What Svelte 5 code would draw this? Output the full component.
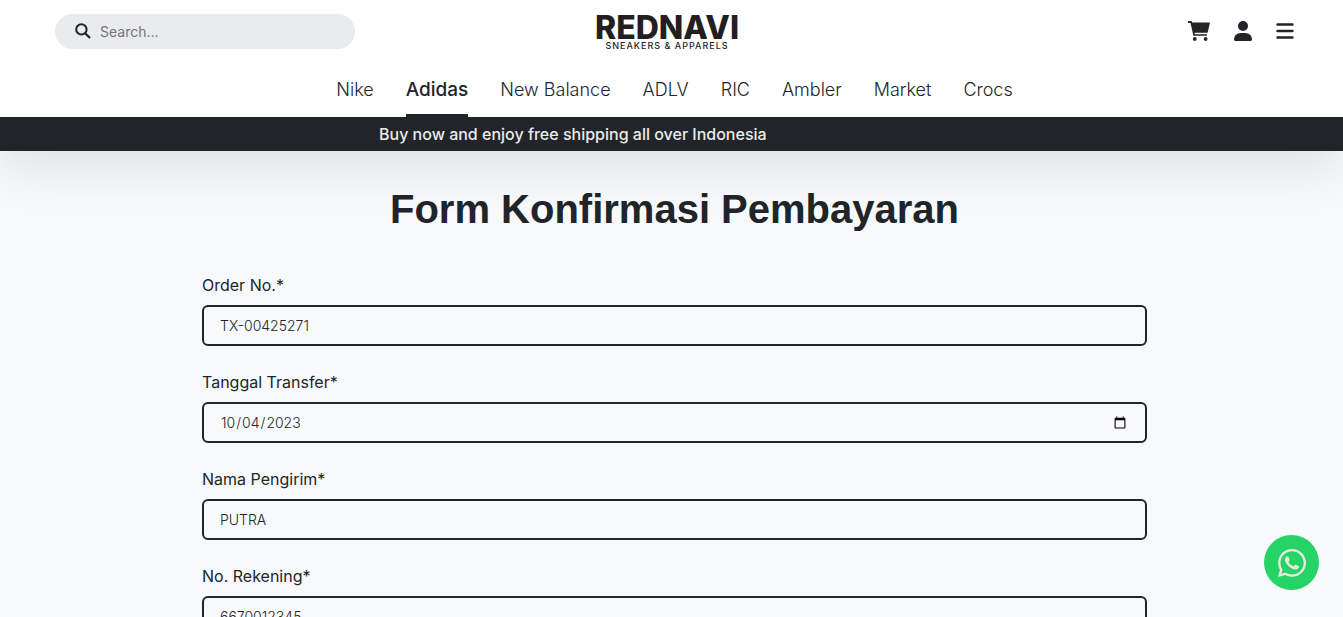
<script>
  const brands = ['Nike', 'Adidas', 'New Balance', 'ADLV', 'RIC', 'Ambler', 'Market', 'Crocs'];
  const active = 'Adidas';

  let fields = $state([
    { id: 'order', label: 'Order No.*', type: 'text', value: 'TX-00425271' },
    { id: 'date', label: 'Tanggal Transfer*', type: 'date', value: '2023-10-04' },
    { id: 'sender', label: 'Nama Pengirim*', type: 'text', value: 'PUTRA' },
    { id: 'account', label: 'No. Rekening*', type: 'text', value: '6670012345' }
  ]);
</script>

<header>
  <div class="top">
    <form class="search" role="search">
      <svg width="16" height="16" viewBox="0 0 16 16" fill="none" stroke="currentColor" stroke-width="2" aria-hidden="true">
        <circle cx="6.4" cy="6.4" r="5.2" />
        <path d="M10.2 10.2 15 15" stroke-width="2.3" />
      </svg>
      <input type="search" placeholder="Search..." aria-label="Search" />
    </form>

    <a class="logo" href="/">
      <span class="name">REDNAVI</span>
      <span class="tagline">SNEAKERS &amp; APPARELS</span>
    </a>

    <div class="actions">
      <button type="button" aria-label="Cart">
        <svg width="22" height="20" viewBox="0 0 22 20" fill="currentColor">
          <path d="M0 0h3.6l.5 1.6H22l-2.4 10.1H6.5l.4 1.5h12v1.5H5.4L2.5 1.9H0z" />
          <circle cx="6.8" cy="18" r="1.9" />
          <circle cx="17.6" cy="18" r="1.9" />
        </svg>
      </button>
      <button type="button" aria-label="Account">
        <svg width="18" height="20" viewBox="0 0 18 20" fill="currentColor">
          <circle cx="9" cy="5" r="5" />
          <path d="M0 18.6C0 14.8 3 12 6.800 12h4.400C15 12 18 14.800 18 18.600c0 .8-.6 1.400-1.400 1.400H1.400C.6 20 0 19.400 0 18.600z" />
        </svg>
      </button>
      <button type="button" aria-label="Menu">
        <svg width="18" height="20" viewBox="0 0 18 20" fill="none" stroke="currentColor" stroke-width="2.400" stroke-linecap="round">
          <path d="M1.500 3.500h15M1.500 10h15M1.500 16.500h15" />
        </svg>
      </button>
    </div>
  </div>

  <nav>
    {#each brands as brand}
      <a href="#{brand}" class:active={brand === active}>{brand}</a>
    {/each}
  </nav>

  <p class="banner">Buy now and enjoy free shipping all over Indonesia</p>
</header>

<main>
  <h1>Form Konfirmasi Pembayaran</h1>
  <form class="fields">
    {#each fields as field}
      <div class="field">
        <label for={field.id}>{field.label}</label>
        {#if field.type === 'date'}
          <input id={field.id} type="date" bind:value={field.value} />
        {:else}
          <input id={field.id} type="text" bind:value={field.value} />
        {/if}
      </div>
    {/each}
  </form>
</main>

<a class="whatsapp" href="#whatsapp" aria-label="WhatsApp">
  <svg width="28" height="28" viewBox="0 0 448 448" fill="currentColor">
    <path d="M380.900 65.100C339 23.100 283.200 0 223.900 0 101.500 0 1.900 99.600 1.900 222c0 39.100 10.200 77.300 29.600 111L0 448l117.700-30.900c32.400 17.700 68.900 27 106.100 27h.1c122.300 0 224.100-99.600 224.100-222 0-59.300-25.200-115-67.100-157zm-157 341.600c-33.200 0-65.700-8.900-94-25.700l-6.700-4-69.800 18.300L72 327.200l-4.400-7c-18.500-29.400-28.200-63.300-28.200-98.200 0-101.700 82.800-184.500 184.600-184.500 49.300 0 95.600 19.200 130.400 54.100 34.800 34.900 56.200 81.200 56.100 130.500 0 101.800-84.900 184.600-186.600 184.600zm101.200-138.200c-5.500-2.800-32.800-16.200-37.900-18-5.100-1.900-8.800-2.800-12.500 2.800-3.700 5.600-14.300 18-17.600 21.800-3.200 3.700-6.500 4.200-12 1.400-32.600-16.300-54-29.100-75.500-66-5.700-9.800 5.700-9.100 16.300-30.300 1.800-3.700.9-6.900-.5-9.700-1.400-2.800-12.500-30.100-17.100-41.200-4.500-10.800-9.100-9.300-12.500-9.500-3.200-.2-6.900-.2-10.600-.2-3.700 0-9.700 1.400-14.800 6.900-5.100 5.600-19.400 19-19.400 46.300 0 27.300 19.900 53.700 22.600 57.400 2.800 3.700 39.100 59.700 94.800 83.800 35.200 15.200 49 16.500 66.600 13.900 10.700-1.600 32.800-13.400 37.400-26.400 4.600-13 4.600-24.100 3.200-26.400-1.300-2.500-5-3.900-10.500-6.600z" />
  </svg>
</a>

<style>
  :global(body) {
    margin: 0;
    background: #f8f9fb;
    color: #212529;
    font-family: Inter, 'Liberation Sans', sans-serif;
    font-size: 16px;
    line-height: 24px;
  }

  a {
    color: inherit;
    text-decoration: none;
  }

  input {
    box-sizing: border-box;
    font-family: inherit;
    color: inherit;
    outline: 0;
  }

  header {
    position: sticky;
    top: 0;
    z-index: 1;
    background: #fff;
    box-shadow: 0 16px 48px rgba(0, 0, 0, 0.1);
  }

  .top {
    display: grid;
    grid-template-columns: 1fr auto 1fr;
    align-items: center;
    height: 62px;
    padding: 0 49px 0 55px;
  }

  .search {
    display: flex;
    align-items: center;
    gap: 9px;
    box-sizing: border-box;
    width: 300px;
    height: 35px;
    padding: 0 20px;
    border-radius: 18px;
    background: #e8ecef;
  }

  .search input {
    flex: 1;
    min-width: 0;
    padding: 0;
    border: 0;
    background: none;
    font-size: 14px;
  }

  .search input::placeholder {
    color: #757575;
  }

  .logo {
    display: flex;
    flex-direction: column;
    align-items: center;
    padding-right: 15px;
    color: #231f20;
  }

  .name {
    font-size: 32px;
    font-weight: 800;
    line-height: 30px;
  }

  .tagline {
    font-size: 9px;
    font-weight: 500;
    line-height: 6px;
    letter-spacing: 1px;
  }

  .actions {
    display: flex;
    justify-content: flex-end;
    gap: 24px;
  }

  button {
    display: flex;
    padding: 0;
    border: 0;
    background: none;
    color: inherit;
  }

  nav {
    display: flex;
    justify-content: center;
    gap: 32px;
    padding-left: 6px;
    font-size: 18px;
    font-weight: 300;
  }

  nav a {
    padding: 16px 0 12px;
    border-bottom: 3px solid transparent;
  }

  nav .active {
    border-color: #212529;
    font-size: 19px;
    font-weight: 500;
  }

  .banner {
    margin: 0;
    padding: 5px 0 5px 379px;
    background: #212529;
    color: #e9ebed;
    font-weight: 500;
  }

  main {
    max-width: 945px;
    margin: 0 auto;
    padding: 34px 24px 48px 30px;
  }

  h1 {
    margin: 0 0 40px;
    font-family: 'Liberation Sans', Arial, sans-serif;
    font-size: 40px;
    line-height: 48px;
    text-align: center;
  }

  .fields {
    display: grid;
    gap: 24px;
  }

  .field {
    display: grid;
    gap: 8px;
  }

  .field input {
    width: 100%;
    height: 41px;
    padding: 0 16px;
    border: 2px solid #212529;
    border-radius: 6px;
    background: transparent;
    font-size: 14px;
    font-weight: 300;
  }

  .whatsapp {
    position: fixed;
    right: 24px;
    bottom: 27px;
    z-index: 2;
    display: grid;
    place-items: center;
    width: 55px;
    height: 55px;
    border-radius: 50%;
    background: #25d366;
    color: #e8ecdf;
  }
</style>
